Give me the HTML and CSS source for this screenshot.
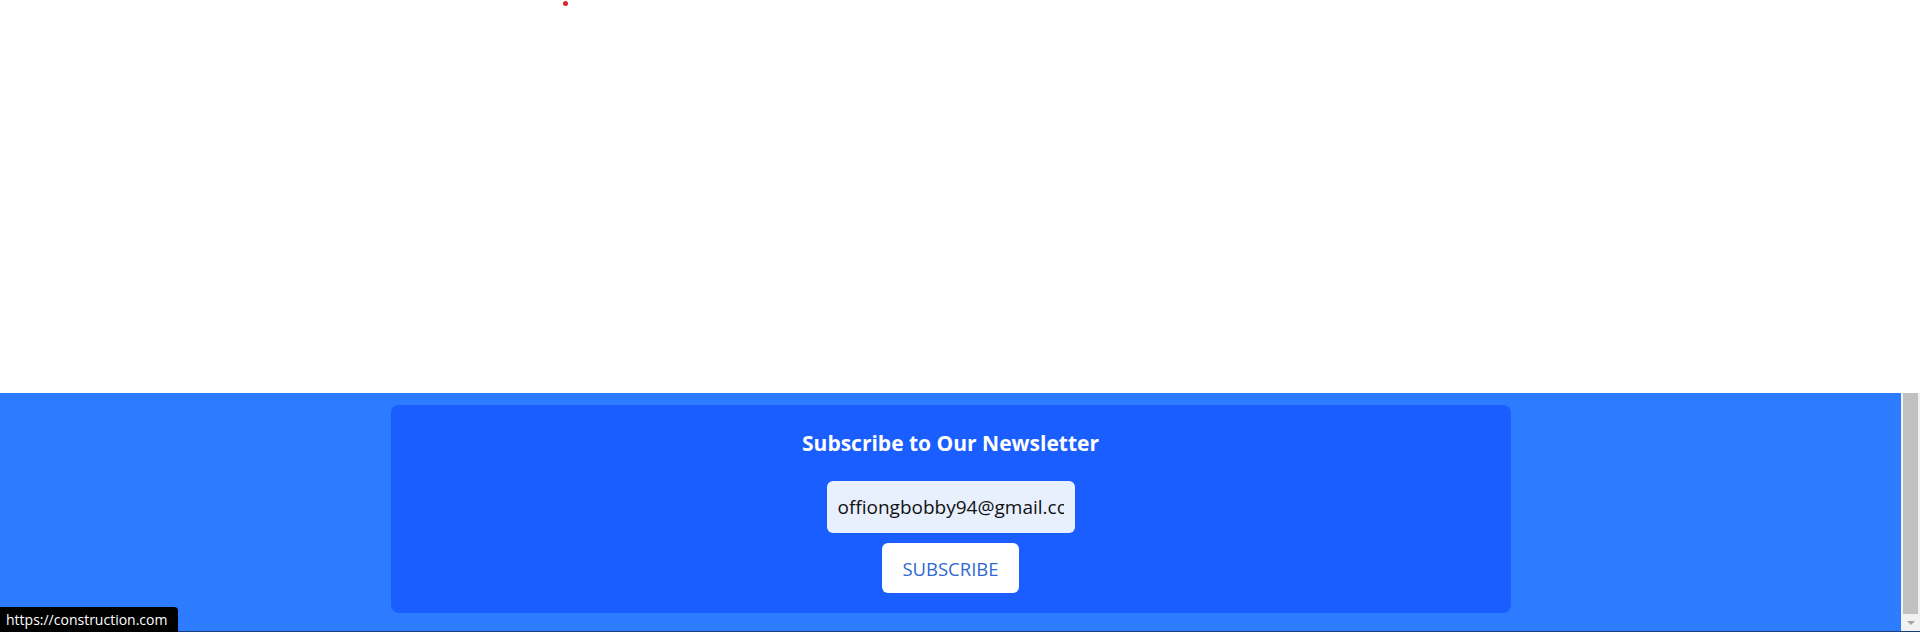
FILE: index.html
```html
<!DOCTYPE html>
<html lang="en">
<head>
<meta charset="utf-8">
<title>Newsletter</title>
<link rel="stylesheet" href="styles.css">
</head>
<body>
  <div class="top">
    <span class="dot"></span>
  </div>
  <footer class="band">
    <div class="band-main">
      <section class="card">
        <h2 class="title">Subscribe to Our Newsletter</h2>
        <form class="form">
          <input class="email" type="email" value="offiongbobby94@gmail.com">
          <button class="btn" type="button">SUBSCRIBE</button>
        </form>
      </section>
    </div>
    <div class="scrollbar">
      <div class="thumb"></div>
      <div class="arrow"></div>
    </div>
  </footer>
  <div class="status">https://construction.com</div>
</body>
</html>
```
FILE: styles.css
```css
* { box-sizing: border-box; }
html, body { margin: 0; padding: 0; }
body {
  width: 1920px;
  height: 632px;
  overflow: hidden;
  background: #ffffff;
  font-family: "Open Sans", "Noto Sans", sans-serif;
  display: flex;
  flex-direction: column;
}
.top {
  height: 393px;
  padding-left: 563px;
  padding-top: 1px;
}
.dot {
  display: block;
  width: 5px;
  height: 5px;
  border-radius: 50%;
  background: #e0242c;
}
.band {
  flex: 1;
  display: flex;
  background: #2d7cff;
  border-bottom: 1px solid #1b3d7a;
}
.band-main {
  flex: 1;
  padding: 12px 0 0;
}
.card {
  width: 1120px;
  margin: 0 auto;
  background: #1a5eff;
  border-radius: 8px;
  padding: 22px 0 20px;
  display: flex;
  flex-direction: column;
  align-items: center;
}
.title {
  margin: 0;
  color: #ffffff;
  font-size: 21px;
  line-height: 32px;
  font-weight: 700;
}
.form {
  margin-top: 22px;
  display: flex;
  flex-direction: column;
  align-items: center;
  gap: 10px;
}
.email {
  width: 248px;
  height: 52px;
  border: none;
  border-radius: 6px;
  background: #e8f0fe;
  padding: 0 11px;
  font-family: inherit;
  font-size: 19px;
  color: #111111;
  outline: none;
}
.btn {
  height: 50px;
  padding: 0 20px;
  border: none;
  border-radius: 6px;
  background: #ffffff;
  color: #3068d2;
  font-family: inherit;
  font-size: 18.5px;
  cursor: pointer;
}
.scrollbar {
  width: 19px;
  background: #f1f1f1;
  display: flex;
  flex-direction: column;
  padding: 0 2px;
}
.thumb {
  flex: 1;
  background: #c1c1c1;
}
.arrow {
  height: 17px;
  display: flex;
  justify-content: center;
  align-items: center;
}
.arrow::before {
  content: "";
  border-left: 4px solid transparent;
  border-right: 4px solid transparent;
  border-top: 4px solid #a3a3a3;
}
.status {
  position: fixed;
  left: 0;
  bottom: 0;
  width: 178px;
  height: 25px;
  padding: 0 0 0 6px;
  background: #000000;
  color: #ffffff;
  font-size: 14px;
  line-height: 25px;
  border-top-right-radius: 4px;
  white-space: nowrap;
}
```
